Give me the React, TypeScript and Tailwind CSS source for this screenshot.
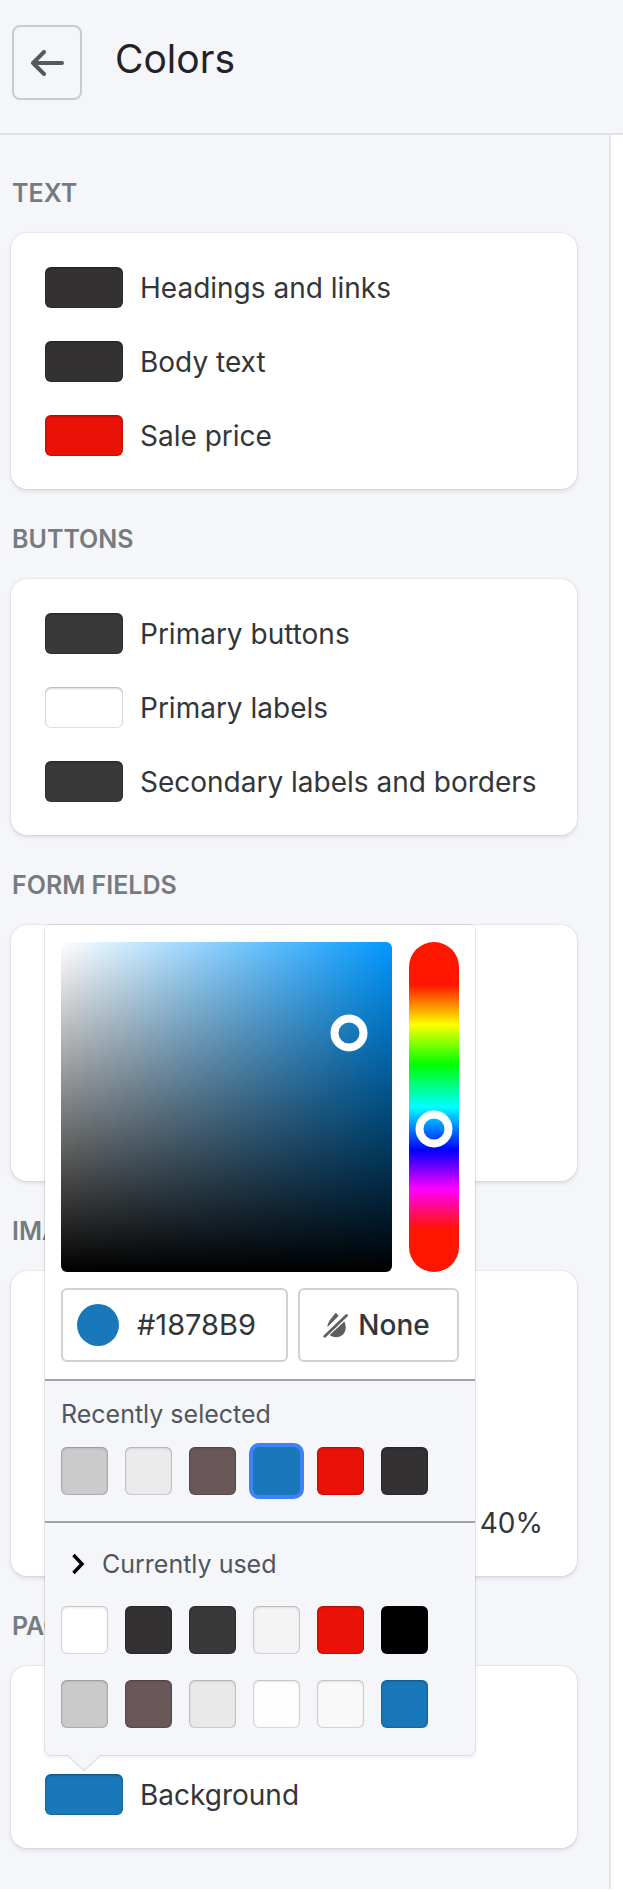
import { useState } from "react";

const swatchGroups = [
  {
    title: "Text",
    rows: [
      { id: "headings", label: "Headings and links", color: "#333132" },
      { id: "body", label: "Body text", color: "#333132" },
      { id: "sale", label: "Sale price", color: "#ea1107" },
    ],
  },
  {
    title: "Buttons",
    rows: [
      { id: "primary-buttons", label: "Primary buttons", color: "#393939" },
      { id: "primary-labels", label: "Primary labels", color: "#ffffff" },
      { id: "secondary", label: "Secondary labels and borders", color: "#393939" },
    ],
  },
  {
    title: "Form fields",
    rows: [
      { id: "field-text", label: "Text", color: "#333132" },
      { id: "field-background", label: "Background", color: "#ffffff" },
      { id: "field-borders", label: "Borders", color: "#f4f4f4" },
    ],
  },
];

const recentColors = ["#cbcbcb", "#ebebeb", "#6a5759", "#1878b9", "#ea1107", "#333132"];

const usedColors = [
  "#ffffff", "#333132", "#393939", "#f4f4f4", "#ea1107", "#000000",
  "#cacaca", "#6a5759", "#e9e9e9", "#fefefe", "#f9f9f9", "#1978b9",
];

// hex -> hue in degrees, saturation and value in percent
function toHsv(hex: string) {
  const [r, g, b] = [1, 3, 5].map((i) => parseInt(hex.slice(i, i + 2), 16) / 255);
  const max = Math.max(r, g, b);
  const delta = max - Math.min(r, g, b);
  let hue = 0;
  if (delta > 0) {
    if (max === r) hue = ((g - b) / delta + 6) % 6;
    else if (max === g) hue = (b - r) / delta + 2;
    else hue = (r - g) / delta + 4;
  }
  return { hue: hue * 60, sat: max ? (delta / max) * 100 : 0, val: max * 100 };
}

type SwatchProps = { id?: string; name?: string; color: string };

function Swatch({ id, name, color }: SwatchProps) {
  return (
    <button
      id={id}
      type="button"
      aria-label={name}
      className="h-[41px] w-[78px] shrink-0 rounded-md shadow-[inset_0_0_0_1px_rgba(0,0,0,0.12),inset_0_2px_2px_rgba(0,0,0,0.16)]"
      style={{ backgroundColor: color }}
    />
  );
}

type SwatchRowProps = { id: string; label: string; color: string };

function SwatchRow({ id, label, color }: SwatchRowProps) {
  return (
    <div className="flex h-[41px] items-center gap-[17px]">
      <Swatch id={id} color={color} />
      <label htmlFor={id} className="text-[28px] leading-8 whitespace-nowrap">
        {label}
      </label>
    </div>
  );
}

function Group({ title, children }: { title: string; children: React.ReactNode }) {
  return (
    <section>
      <h2 className="pt-9 pb-[26px] pl-px text-[25px] leading-7 font-semibold text-[#767b80] uppercase">
        {title}
      </h2>
      <div className="flex flex-col gap-[33px] rounded-2xl bg-white px-[34px] pt-[34px] pb-[33px] shadow-[0_0_0_1px_rgba(63,63,68,0.05),0_2px_4px_rgba(63,63,68,0.15)]">
        {children}
      </div>
    </section>
  );
}

type PaletteProps = { colors: string[]; selected?: string; onSelect: (color: string) => void };

function Palette({ colors, selected, onSelect }: PaletteProps) {
  return (
    <div className="grid grid-cols-[repeat(6,47px)] gap-x-[17px] gap-y-[26px]">
      {colors.map((color) => (
        <button
          key={color}
          type="button"
          aria-label={color}
          onClick={() => onSelect(color)}
          className={`h-12 rounded-md ${
            color === selected
              ? "ring-4 ring-[#3d82f7]"
              : "shadow-[inset_0_0_0_1px_rgba(0,0,0,0.12),inset_0_1px_3px_rgba(0,0,0,0.18)]"
          }`}
          style={{ backgroundColor: color }}
        />
      ))}
    </div>
  );
}

function ColorPicker({ value, onChange }: { value: string; onChange: (color: string) => void }) {
  const { hue, sat, val } = toHsv(value);

  return (
    <div className="absolute bottom-[calc(100%+19px)] left-0 w-[430px] rounded-md bg-[#f5f6fa] shadow-[0_0_0_1px_rgba(63,63,68,0.1),0_2px_4px_rgba(63,63,68,0.12)]">
      <div className="rounded-t-md border-b-2 border-[#a0a2a5] bg-white px-4 py-[17px]">
        <div className="flex gap-[17px]">
          <div
            className="relative h-[330px] flex-1 rounded-md"
            style={{
              backgroundImage: `linear-gradient(to top, #000, transparent), linear-gradient(to right, #fff, hsl(${hue} 100% 50%))`,
            }}
          >
            <button
              type="button"
              aria-label="Saturation and brightness"
              className="absolute size-[37px] -translate-1/2 rounded-full border-8 border-white"
              style={{ left: `${sat}%`, top: `${100 - val}%` }}
            />
          </div>
          <div className="relative w-[50px] rounded-full bg-[linear-gradient(to_bottom,#ff1500_13%,#ff0_25%,#0f0_37%,#0ff_50%,#00f_63%,#f0f_75%,#ff1500_87%)]">
            <div
              className="absolute left-1/2 size-[37px] -translate-1/2 rounded-full border-8 border-white"
              style={{ top: `${(hue / 360) * 100}%` }}
            />
            <input
              type="range"
              aria-label="Hue"
              min={0}
              max={360}
              defaultValue={Math.round(hue)}
              className="absolute inset-0 h-full w-full opacity-0 [writing-mode:vertical-lr]"
            />
          </div>
        </div>
        <div className="mt-4 flex gap-[10px]">
          <label className="flex h-[74px] min-w-0 flex-1 items-center gap-[18px] rounded-md border-2 border-[#cfd1d4] px-[14px]">
            <span className="size-[42px] shrink-0 rounded-full" style={{ backgroundColor: value }} />
            <input
              type="text"
              aria-label="Hex color"
              value={value.toUpperCase()}
              readOnly
              className="w-full min-w-0 text-[29px] leading-8 outline-none"
            />
          </label>
          <button
            type="button"
            className="flex h-[74px] w-[161px] items-center justify-center gap-[10px] rounded-md border-2 border-[#cfd1d4] pr-1 text-[28px] leading-8 font-medium"
          >
            <svg viewBox="0 0 25 26" className="h-[26px] w-[25px] shrink-0" aria-hidden="true">
              <path d="M12.5 1c1 .1 2.400 1.800 3 3.100L4.500 15C4 10.500 9.500 5 12.500 1Z" fill="#5c6064" />
              <path d="M21.300 9.500c1 1.900 1.400 4 1.400 6 0 5.600-4 9.700-9.500 9.700-2.800 0-5-.8-6.500-2.200L21.300 9.500Z" fill="#5c6064" />
              <path d="M1.800 24.200 23.500 3.500" fill="none" stroke="#5c6064" strokeWidth="2.800" strokeLinecap="round" />
            </svg>
            None
          </button>
        </div>
      </div>

      <div className="border-b-2 border-[#a0a2a5] px-4 pt-[19px] pb-[26px] text-[#50565c]">
        <h3 className="mb-[19px] text-[25px] leading-7">Recently selected</h3>
        <Palette colors={recentColors} selected={value} onSelect={onChange} />
      </div>

      <div className="px-4 py-[27px] text-[#50565c]">
        <button type="button" aria-expanded="true" className="mb-7 flex h-7 items-center gap-[17px] pl-[10px] text-[25px] leading-7">
          <svg viewBox="0 0 14 22" className="h-[22px] w-[14px]" aria-hidden="true">
            <path d="M2.500 2 11 11l-8.500 9" fill="none" stroke="#000" strokeWidth="3.400" />
          </svg>
          Currently used
        </button>
        <Palette colors={usedColors} onSelect={onChange} />
      </div>

      {/* pointer towards the swatch being edited */}
      <svg viewBox="0 0 34 18" className="absolute top-full left-[22px] -mt-px h-[18px] w-[34px]" aria-hidden="true">
        <path d="M0 0h34L17 16.500Z" fill="#f5f6fa" />
        <path d="M0 1 17 16.500 34 1" fill="none" stroke="#dfe1e4" strokeWidth="1.500" />
      </svg>
    </div>
  );
}

export default function App() {
  const [background, setBackground] = useState("#1878b9");

  return (
    <div className="min-h-screen bg-white font-[Inter,'Liberation_Sans',sans-serif] text-[#333638]">
      <header className="flex h-[135px] items-start gap-[33px] border-b-2 border-[#dfe3e8] bg-[#f5f6fa] pt-[25px] pl-3">
        <button
          type="button"
          aria-label="Back"
          className="flex h-[75px] w-[70px] items-center justify-center rounded-lg border-2 border-[#c9cccf]"
        >
          <svg viewBox="0 0 34 26" className="h-[26px] w-[34px]" aria-hidden="true">
            <path
              d="M14 2 3 13l11 11M3.500 13H32"
              fill="none"
              stroke="#56595d"
              strokeWidth="4"
              strokeLinecap="round"
              strokeLinejoin="round"
            />
          </svg>
        </button>
        <h1 className="pt-3 text-[39px] leading-[44px] text-[#212326]">Colors</h1>
      </header>

      <main className="flex">
        <div className="min-w-0 flex-1 border-r-2 border-[#e3e5e8] bg-[#f5f6fa] pt-2 pr-8 pb-[41px] pl-[11px]">
          {swatchGroups.map((group) => (
            <Group key={group.title} title={group.title}>
              {group.rows.map((row) => (
                <SwatchRow key={row.id} {...row} />
              ))}
            </Group>
          ))}

          <Group title="Images">
            <SwatchRow id="image-text" label="Text" color="#ffffff" />
            <Swatch name="Overlay" color="#000000" />
            <div className="flex flex-col gap-[15px]">
              <label htmlFor="overlay-opacity" className="text-[28px] leading-[34px]">
                Opacity
              </label>
              <div className="flex h-[41px] items-center gap-[17px]">
                <input id="overlay-opacity" type="range" defaultValue={40} className="min-w-0 flex-1" />
                <output htmlFor="overlay-opacity" className="text-[28px] leading-8">40%</output>
              </div>
            </div>
          </Group>

          <Group title="Page">
            <SwatchRow id="page-lines" label="Lines and borders" color="#e9e9e9" />
            <div className="relative">
              <SwatchRow id="page-background" label="Background" color={background} />
              <ColorPicker value={background} onChange={setBackground} />
            </div>
          </Group>
        </div>
        <div className="w-3 shrink-0" />
      </main>
    </div>
  );
}
